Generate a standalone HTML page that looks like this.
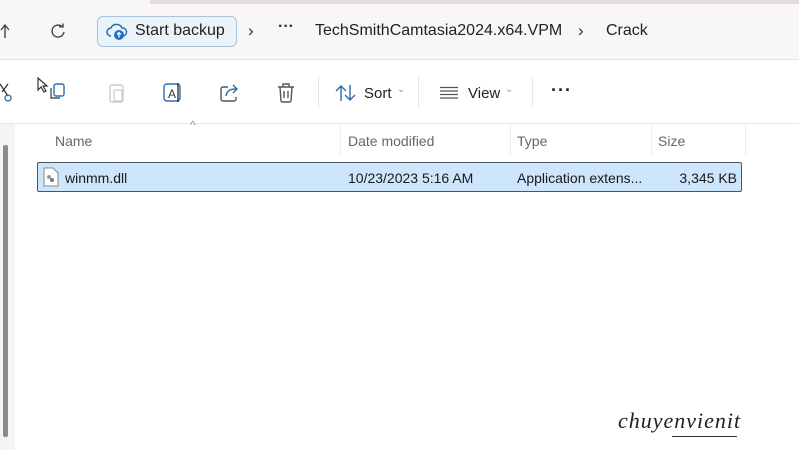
<!DOCTYPE html>
<html><head><meta charset="utf-8"><style>
*{margin:0;padding:0;box-sizing:border-box}
body{width:799px;height:450px;overflow:hidden;background:#fff;font-family:"Liberation Sans",sans-serif;position:relative;color:#1a1a1a}
.a{position:absolute}
.t{position:absolute;white-space:nowrap}
</style></head><body>
<div class="a" style="left:0;top:0;width:799px;height:60px;background:#f8f6f7"></div>
<div class="a" style="left:150px;top:0;width:649px;height:4px;background:#e2dcdc"></div>
<div class="a" style="left:0;top:59px;width:799px;height:1px;background:#e3e3e3"></div>
<svg class="a" style="left:0;top:22px" width="12" height="18" viewBox="0 0 12 18"><path d="M1 8 L5 3 L9 8 M5 3 V16" stroke="#444" stroke-width="1.4" fill="none"/></svg>
<svg class="a" style="left:50px;top:23px" width="16" height="16" viewBox="0 0 16 16"><path d="M12.5 4 A6 6 0 1 0 14 9" stroke="#444" stroke-width="1.4" fill="none"/><path d="M9 3.5 L13 4 L13 0.5" stroke="#444" stroke-width="1.4" fill="none"/></svg>
<div class="a" style="left:97px;top:16px;width:140px;height:31px;border:1.5px solid #a9c3dc;border-radius:6px;background:#eaf2fa"></div>
<svg class="a" style="left:106px;top:22px" width="22" height="20" viewBox="0 0 22 20"><path d="M5 14 A4 4 0 0 1 5 6 A6 6 0 0 1 16 6 A4 4 0 0 1 17 14" stroke="#2b6cb0" stroke-width="1.5" fill="none"/><circle cx="13" cy="13" r="5" fill="#1f6fc7"/><path d="M13 15.5 V10.5 M11 12.5 L13 10.5 L15 12.5" stroke="#fff" stroke-width="1.3" fill="none"/></svg>
<div class="t" style="left:135px;top:22px;font-size:16px;color:#222">Start backup</div>
<div class="t" style="left:248px;top:21px;font-size:17px;color:#333">›</div>
<div class="t" style="left:278px;top:18px;font-size:16px;font-weight:bold;color:#333">···</div>
<div class="t" style="left:315px;top:22px;font-size:16px;color:#222">TechSmithCamtasia2024.x64.VPM</div>
<div class="t" style="left:578px;top:21px;font-size:17px;color:#333">›</div>
<div class="t" style="left:606px;top:22px;font-size:16px;color:#222">Crack</div>
<svg class="a" style="left:0;top:82px" width="12" height="20" viewBox="0 0 12 20"><path d="M0 2 L8 14 M8 2 L2 10" stroke="#333" stroke-width="1.3" fill="none"/><circle cx="8" cy="16" r="3" stroke="#2b6cb0" stroke-width="1.3" fill="none"/></svg>
<svg class="a" style="left:36px;top:76px" width="34" height="26" viewBox="0 0 34 26"><path d="M2 2 L2 14 L5 11 L8 16 L10 15 L7 10 L11 10 Z" stroke="#333" stroke-width="1.2" fill="#fff"/><rect x="18" y="8" width="10" height="12" rx="2" stroke="#2b6cb0" stroke-width="1.4" fill="none"/><path d="M15 12 V22 H24" stroke="#555" stroke-width="1.4" fill="none"/></svg>
<svg class="a" style="left:107px;top:82px" width="20" height="22" viewBox="0 0 20 22"><rect x="3" y="3" width="13" height="17" rx="2" stroke="#ccc" stroke-width="1.4" fill="none"/><rect x="7" y="8" width="8" height="11" rx="1" stroke="#ccc" stroke-width="1.2" fill="none"/></svg>
<svg class="a" style="left:161px;top:81px" width="24" height="24" viewBox="0 0 24 24"><rect x="3" y="3" width="16" height="17" rx="3" stroke="#2b6cb0" stroke-width="1.4" fill="none"/><text x="7" y="17" font-size="12" fill="#333" font-family="Liberation Sans">A</text><path d="M17 2 V21" stroke="#333" stroke-width="1.4"/></svg>
<svg class="a" style="left:219px;top:82px" width="22" height="22" viewBox="0 0 22 22"><path d="M9 5 H4 A2 2 0 0 0 2 7 V17 A2 2 0 0 0 4 19 H15 A2 2 0 0 0 17 17 V15" stroke="#555" stroke-width="1.4" fill="none"/><path d="M7 14 C8 8 12 7 17 7 M14 3 L18 7 L14 11" stroke="#2b6cb0" stroke-width="1.4" fill="none"/></svg>
<svg class="a" style="left:276px;top:82px" width="20" height="22" viewBox="0 0 20 22"><path d="M2 5 H18 M7 5 V2 H13 V5 M4 5 L5 19 A2 2 0 0 0 7 20 H13 A2 2 0 0 0 15 19 L16 5 M8 9 V16 M12 9 V16" stroke="#555" stroke-width="1.4" fill="none"/></svg>
<div class="a" style="left:318px;top:76px;width:1px;height:32px;background:#e8e8e8"></div>
<svg class="a" style="left:335px;top:84px" width="22" height="18" viewBox="0 0 22 18"><path d="M6 17 V2 M1 7 L6 2 L11 7" stroke="#2b6cb0" stroke-width="1.4" fill="none"/><path d="M15 1 V16 M10 11 L15 16 L20 11" stroke="#2b6cb0" stroke-width="1.4" fill="none"/></svg>
<div class="t" style="left:364px;top:85px;font-size:15px;color:#222">Sort</div>
<div class="t" style="left:397px;top:84px;font-size:10px;color:#999">⌄</div>
<div class="a" style="left:418px;top:76px;width:1px;height:32px;background:#e8e8e8"></div>
<svg class="a" style="left:439px;top:86px" width="20" height="14" viewBox="0 0 20 14"><path d="M1 1.5 H19 M1 5 H19 M1 8.5 H19 M1 12 H19" stroke="#555" stroke-width="1.2"/></svg>
<div class="t" style="left:468px;top:85px;font-size:15px;color:#222">View</div>
<div class="t" style="left:505px;top:84px;font-size:10px;color:#999">⌄</div>
<div class="a" style="left:532px;top:76px;width:1px;height:32px;background:#e8e8e8"></div>
<div class="t" style="left:551px;top:80px;font-size:18px;font-weight:bold;color:#222;letter-spacing:1px">···</div>
<div class="a" style="left:0;top:123px;width:799px;height:1px;background:#e8e8e8"></div>
<div class="a" style="left:0;top:124px;width:15px;height:326px;background:#f4f4f4"></div>
<div class="a" style="left:3px;top:145px;width:5px;height:292px;background:#8a8a8a;border-radius:2px"></div>
<div class="t" style="left:190px;top:118px;font-size:12px;color:#999">^</div>
<div class="t" style="left:55px;top:133px;font-size:14px;color:#666">Name</div>
<div class="a" style="left:340px;top:124px;width:1px;height:32px;background:#ececec"></div>
<div class="t" style="left:348px;top:133px;font-size:14px;color:#666">Date modified</div>
<div class="a" style="left:510px;top:124px;width:1px;height:32px;background:#ececec"></div>
<div class="t" style="left:517px;top:133px;font-size:14px;color:#666">Type</div>
<div class="a" style="left:651px;top:124px;width:1px;height:32px;background:#ececec"></div>
<div class="t" style="left:658px;top:133px;font-size:14px;color:#666">Size</div>
<div class="a" style="left:745px;top:124px;width:1px;height:32px;background:#ececec"></div>
<div class="a" style="left:37px;top:162px;width:705px;height:30px;background:#cde6fb;border:1.5px solid #4a5561;border-radius:2px"></div>
<svg class="a" style="left:43px;top:167px" width="16" height="20" viewBox="0 0 16 20"><path d="M1 1 H10 L15 6 V19 H1 Z" stroke="#888" fill="#fff"/><circle cx="6" cy="10" r="2" fill="#999"/><circle cx="9" cy="13" r="2" fill="#777"/></svg>
<div class="t" style="left:65px;top:170px;font-size:14px;color:#1a1a1a">winmm.dll</div>
<div class="t" style="left:348px;top:170px;font-size:14px;color:#1a1a1a">10/23/2023 5:16 AM</div>
<div class="t" style="left:517px;top:170px;font-size:14px;color:#1a1a1a">Application extens...</div>
<div class="t" style="right:62px;top:170px;font-size:14px;color:#1a1a1a">3,345 KB</div>
<div class="t" style="left:618px;top:408px;font-family:'Liberation Serif',serif;font-style:italic;font-size:22px;color:#222;letter-spacing:1px">chuyenvienit</div>
<div class="a" style="left:672px;top:436px;width:65px;height:1px;background:#333"></div>
</body></html>
